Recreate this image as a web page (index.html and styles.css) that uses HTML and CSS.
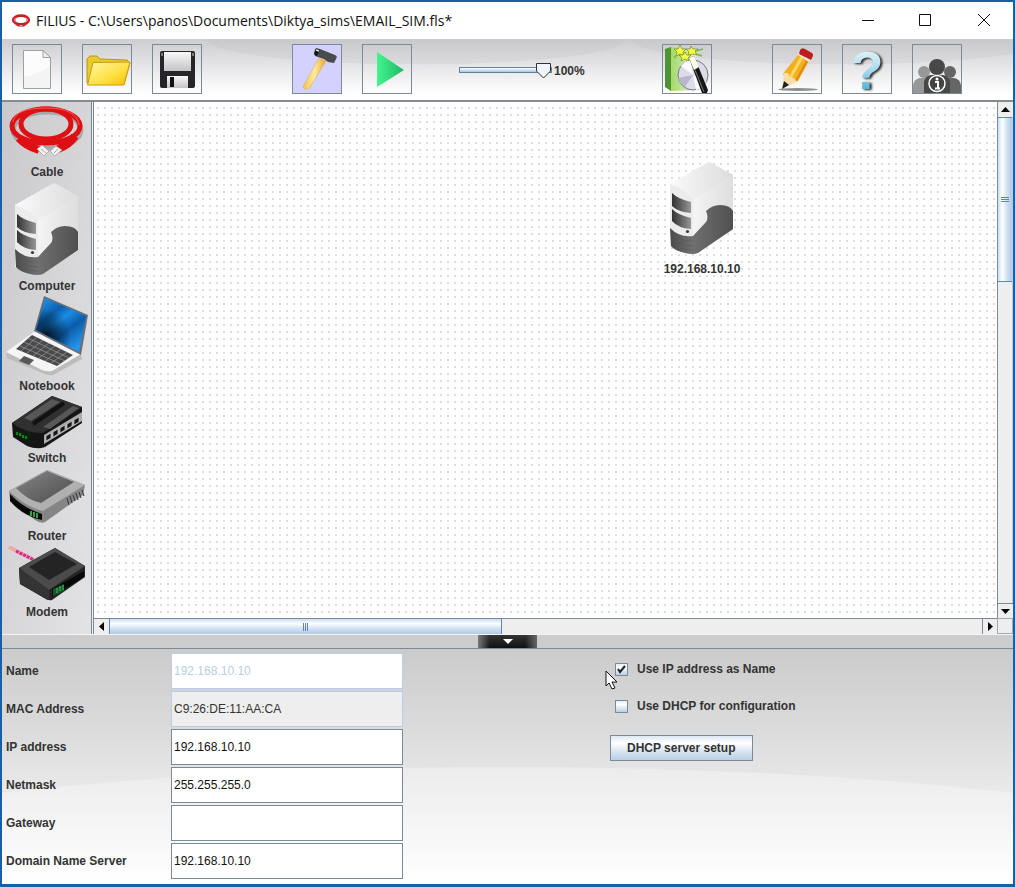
FILE: index.html
```html
<!DOCTYPE html>
<html lang="en">
<head>
	<title>FILIUS</title>
	<meta charset="utf-8">
	<meta name="viewport" content="width=device-width, initial-scale=1">
	<link rel="stylesheet" href="styles.css">
</head>
<body>

	<!-- shared gradients and the computer symbol -->
	<svg class="defs" width="0" height="0" aria-hidden="true">
		<defs>
			<linearGradient id="gTop" x1="0" y1="0" x2="1" y2="0"><stop offset="0" stop-color="#fafafa"/><stop offset="1" stop-color="#dcdcdc"/></linearGradient>
			<linearGradient id="gSide" x1="0" y1="0" x2="1" y2="0"><stop offset="0" stop-color="#f4f4f4"/><stop offset="1" stop-color="#dedede"/></linearGradient>
			<linearGradient id="gVent" x1="0" y1="0" x2="1" y2="0"><stop offset="0" stop-color="#333"/><stop offset="1" stop-color="#969696"/></linearGradient>
			<linearGradient id="gBase" x1="0" y1="0" x2="1" y2="0"><stop offset="0" stop-color="#4a4a4a"/><stop offset=".35" stop-color="#707070"/><stop offset="1" stop-color="#505050"/></linearGradient>
			<linearGradient id="gFolder" x1="0" y1="0" x2="1" y2="1"><stop offset="0" stop-color="#fff6a8"/><stop offset=".6" stop-color="#ffe040"/><stop offset="1" stop-color="#f2bd00"/></linearGradient>
			<linearGradient id="gPlate" x1="0" y1="0" x2="0" y2="1"><stop offset="0" stop-color="#f8f8f8"/><stop offset="1" stop-color="#c4c4c4"/></linearGradient>
			<linearGradient id="gPlay" x1="0" y1="0" x2="1" y2="0"><stop offset="0" stop-color="#42f58e"/><stop offset="1" stop-color="#20b865"/></linearGradient>
			<linearGradient id="gWood" x1="0" y1="0" x2="1" y2="0"><stop offset="0" stop-color="#f3c350"/><stop offset=".5" stop-color="#ffeb9c"/><stop offset="1" stop-color="#e5a62d"/></linearGradient>
			<linearGradient id="gHelp" x1="0" y1="0" x2="0" y2="1"><stop offset="0" stop-color="#fff"/><stop offset=".5" stop-color="#a8daee"/><stop offset="1" stop-color="#2f9dc4"/></linearGradient>
			<linearGradient id="gBook" x1="0" y1="0" x2="1" y2="0"><stop offset="0" stop-color="#a6d96c"/><stop offset="1" stop-color="#e0f0d6"/></linearGradient>
			<linearGradient id="gScreen" x1="0" y1="0" x2=".7" y2="1"><stop offset="0" stop-color="#2ba0f0"/><stop offset=".35" stop-color="#0b5fae"/><stop offset=".5" stop-color="#188ce6"/><stop offset=".7" stop-color="#0c5ca8"/><stop offset="1" stop-color="#2596ee"/></linearGradient>
			<radialGradient id="gGlow" cx=".2" cy=".7" r=".5"><stop offset="0" stop-color="#02101f"/><stop offset="1" stop-color="#02101f" stop-opacity="0"/></radialGradient>
			<linearGradient id="gGrey" x1="0" y1="0" x2="1" y2="1"><stop offset="0" stop-color="#858585"/><stop offset="1" stop-color="#4c4c4c"/></linearGradient>
			<symbol id="computer" viewBox="0 0 64 93">
				<path d="M0 22L39 0L63 13V68L23 92L0 84Z" fill="url(#gSide)"/>
				<path d="M0 22L39 0L63 13L23 37Q15 27 0 22Z" fill="url(#gTop)"/>
				<path d="M0 22Q15 27 23 37V78Q10 76 0 66Z" fill="#ececec"/>
				<path d="M23 37L63 13V52L23 76Z" fill="url(#gSide)"/>
				<path d="M0 66Q10 76 23 74L36 60Q39 56 36 49Q42 43 50 43Q60 43 63 49V67L28 91Q23 93 15 91Q5 89 1 84Z" fill="url(#gBase)"/>
				<path d="M1 71Q9 80 23 79M1 76Q9 84 23 84M2 81Q10 88 23 88" fill="none" stroke="#555" stroke-width=".5"/>
				<path d="M2 31Q8 37 21 40V51Q8 50 2 44ZM2 47Q8 53 21 56V67Q8 66 2 59Z" fill="url(#gVent)"/>
				<circle cx="17.500" cy="69.500" r="1.600" fill="#3a3a3a"/>
			</symbol>
		</defs>
	</svg>

	<div class="window">
		<header class="titlebar">
			<svg class="logo" viewBox="0 0 20 14" width="20" height="14"><ellipse cx="10" cy="6" rx="8" ry="4.500" fill="none" stroke="#d21f25" stroke-width="2.400"/><ellipse cx="10" cy="6" rx="6" ry="3.500" fill="none" stroke="#8d1217" stroke-width=".6"/><path d="M5 10L9 12M15 10L11 12" stroke="#d21f25" stroke-width="2.400"/><path d="M8.500 12H11.500" stroke="#aaa" stroke-width="2"/></svg>
			<h1>FILIUS - C:\Users\panos\Documents\Diktya_sims\EMAIL_SIM.fls*</h1>
			<button type="button" class="win-btn" aria-label="Minimize"><svg viewBox="0 0 14 14" width="14" height="14"><path d="M1 6.500H13"/></svg></button>
			<button type="button" class="win-btn" aria-label="Maximize"><svg viewBox="0 0 14 14" width="14" height="14"><path d="M.5 .5H11.500V11.500H.5Z"/></svg></button>
			<button type="button" class="win-btn" aria-label="Close"><svg viewBox="0 0 14 14" width="14" height="14"><path d="M1 0L13 12M13 0L1 12"/></svg></button>
		</header>

		<div class="toolbar">
			<div class="tool-group">
				<button type="button" class="tool" aria-label="New"><svg viewBox="1 1 48 48">
					<path d="M11.500 6.500H31L38.500 13.500V44.500H11.500Z" fill="#fcfcfc" stroke="#a0a0a0"/><path d="M12 32Q24 32 38 22V44H12Z" fill="#f4f4f4"/><path d="M31 6.500V13.500H38.500Z" fill="#eee" stroke="#a0a0a0"/>
				</svg></button>
				<button type="button" class="tool" aria-label="Open"><svg viewBox="1 1 48 48">
					<path d="M5 39V15L8 12H15L18 15L45 16L48 19L42 40Z" fill="#eac92a" stroke="#b8961c"/><path d="M11 18.500L48 18L42 41H5.500Z" fill="url(#gFolder)" stroke="#c79e12"/>
				</svg></button>
				<button type="button" class="tool" aria-label="Save"><svg viewBox="1 1 48 48">
					<rect x="8" y="7" width="35" height="37" rx="2" fill="#26262a"/><rect x="12" y="8" width="27" height="19" fill="url(#gPlate)"/><rect x="15" y="32" width="21" height="12" fill="url(#gPlate)"/><rect x="18" y="33" width="4" height="10" fill="#111"/><path d="M9 9H11V12H9ZM40 9H42V12H40Z" fill="#777"/>
				</svg></button>
			</div>
			<div class="tool-group modes">
				<button type="button" class="tool active" aria-label="Design mode"><svg viewBox="1 1 48 48">
					<path d="M27 14L34 17L18 43Q16 46 13 45L11 43Z" fill="url(#gWood)" stroke="#dba640" stroke-width=".5"/><path d="M24 4L28 5L43 11Q46 12 44 15L42 19L36 18L32 15L23 12Q21 8 24 4Z" fill="#4a4b4d"/><path d="M24 5L28 6L25 12L22 10Z" fill="#141414"/><path d="M24 6L27 7" stroke="#ddd" stroke-width="1.500"/>
				</svg></button>
				<button type="button" class="tool" aria-label="Run mode"><svg viewBox="1 1 48 48"><path d="M15 8L42 26L15 43Z" fill="url(#gPlay)"/></svg></button>
			</div>
			<div class="speed">
				<input type="range" id="speed" min="0" max="100" value="100" aria-label="Speed">
				<label for="speed">100%</label>
			</div>
			<div class="tool-group wizard">
				<button type="button" class="tool" aria-label="Software wizard"><svg viewBox="1 1 48 48">
					<path d="M3 5L9 3V47L3 43Z" fill="#4f9430"/><path d="M9 3L34 6V46L9 47Z" fill="url(#gBook)"/>
					<circle cx="31" cy="31" r="15" fill="#dcdce9" stroke="#77777e"/><path d="M31 31L19 22A15 15 0 0 1 29 16ZM31 31L44 38A15 15 0 0 1 34 46Z" fill="#fafaff"/><path d="M31 31L16 34A15 15 0 0 0 23 43Z" fill="#b6b6cd"/>
					<path d="M27 14L32 12L46 46L45 49H40Z" fill="#17171a"/><path d="M27 14L32 12L37 23L32 26Z" fill="#fffef0"/><path d="M33 26L42 48" stroke="#77777a"/>
					<g fill="#f2ff45" stroke="#738317" stroke-width=".7"><path d="M18 1L20 5L24 5L21 8L22 12L18 10L14 12L15 8L12 5L16 5Z"/><path d="M29 2L31 5L36 5L33 8L35 11L30 10L26 12L27 8L24 5L28 5Z"/><path d="M23 8L25 11L29 11L26 14L27 17L23 15L19 17L20 14L17 11L21 11Z"/></g>
					<path d="M33 7L41 5M34 10L40 12M12 12L14 14" stroke="#73bd32" stroke-width="1.500"/>
				</svg></button>
			</div>
			<div class="tool-group extras">
				<button type="button" class="tool" aria-label="Documentation"><svg viewBox="1 1 48 48">
					<ellipse cx="26" cy="45.500" rx="20" ry="1.500" fill="#8d8d8d"/><path d="M26 11L37 17L26 37L17 40L11 30L13 27Z" fill="#f5af22"/><path d="M30 13L18 34" stroke="#ffd960" stroke-width="3"/><path d="M35 17L24 37" stroke="#d98a14" stroke-width="2"/>
					<path d="M12 29L16 29L18 33L22 34L25 38L11 44Z" fill="#f5dfa7"/><path d="M12 37L17 41L10 45Z" fill="#222"/><path d="M25 10L28 8L39 14L37 18Z" fill="#ece8df"/><path d="M28 6Q30 3 33 5L40 9Q42 11 40 14L39 16L27 10Z" fill="#be1d1d"/>
				</svg></button>
				<button type="button" class="tool" aria-label="Help"><svg viewBox="1 1 48 48"><text class="q" x="25" y="45">?</text></svg></button>
				<button type="button" class="tool" aria-label="About"><svg viewBox="1 1 48 48">
					<g fill="#989898"><circle cx="12" cy="28" r="6"/><path d="M1 49V41Q2 35 8 34H17V49Z"/></g><g fill="#666"><circle cx="38" cy="28" r="6"/><path d="M33 34H42Q48 35 49 41V49H33Z"/></g><g fill="#484848"><circle cx="25" cy="23" r="8"/><path d="M12 49V38Q13 32 19 31H31Q37 32 38 38V49Z"/></g>
					<circle cx="25" cy="39.500" r="8" fill="#444" stroke="#fff" stroke-width="1.500"/><path d="M23 38H26V44M23 44.500H28" fill="none" stroke="#fff" stroke-width="2"/><circle cx="25" cy="35" r="1.500" fill="#fff"/>
				</svg></button>
			</div>
		</div>

		<main class="workspace">
			<ul class="palette">
				<li><span class="icon"><svg viewBox="0 0 78 56" width="78" height="56">
					<g fill="none" stroke="#8c8c8c" stroke-opacity=".6" stroke-width="5"><ellipse cx="39" cy="24" rx="34" ry="18"/></g>
					<g fill="none" stroke="#df1014" stroke-width="5"><ellipse cx="38" cy="20" rx="34" ry="17"/><ellipse cx="38" cy="18" rx="25" ry="15"/></g>
					<path d="M5 16Q7 2 38 2Q69 2 71 19" fill="none" stroke="#ff5950"/>
					<path d="M11 32Q18 40 31 44M67 30Q61 39 50 43" fill="none" stroke="#de0f13" stroke-width="8"/>
					<path d="M29 43L34 39L41 45L36 50ZM42 45L48 40L54 44L47 50Z" fill="#f4f1f1" stroke="#999" stroke-width=".7"/><path d="M33 43L38 47M46 47L50 43" stroke="#aaa"/>
				</svg></span>Cable</li>
				<li class="h98"><span class="icon"><svg width="64" height="93"><use href="#computer"/></svg></span>Computer</li>
				<li class="h84"><span class="icon"><svg viewBox="0 0 83 80" width="83" height="80">
					<path d="M0 56L29 35L75 58L76 63L47 79Q43 80 36 77L1 62Z" fill="#bcbcbc"/><path d="M0 56L29 35L75 58L46 75Q42 76 36 74Z" fill="#f5f5f5"/>
					<path d="M26 39L67 59L51 70L10 53Z" fill="#4a4a4c"/><path d="M22 42L63 62M18 46L59 65M14 50L55 68M31 41L15 55M37 44L21 57M43 47L27 60M49 50L33 62M55 53L39 65M61 56L45 67" stroke="#999" stroke-width=".7"/>
					<path d="M18 60L28 64L23 69L13 65Z" fill="#58585b"/><path d="M38 0L82 19L75 59L28 35Z" fill="#686e76"/><path d="M39 2L80 20L73 56L30 34Z" fill="url(#gScreen)"/><path d="M39 2L80 20L73 56L30 34Z" fill="url(#gGlow)"/>
				</svg></span>Notebook</li>
				<li class="h56"><span class="icon"><svg viewBox="0 0 71 53" width="71" height="53">
					<path d="M0 27L40 0L70 11V27L33 51Q25 54 15 50L1 41Z" fill="#151515"/><path d="M0 27L40 0L70 11L31 37Q13 37 0 27Z" fill="#303030"/>
					<path d="M12 22L40 3L48 6L19 25ZM31 31L61 10L67 12L38 33Z" fill="#575757"/><path d="M21 28L52 7" stroke="#111" stroke-width="4"/>
					<path d="M32 39L70 16V25L32 48Z" fill="#aaa"/><path d="M34 40L39 37V42L34 45ZM41 36L46 33V38L41 41ZM48 32L53 29V34L48 37ZM55 28L60 25V30L55 33ZM62 24L67 21V26L62 29Z" fill="#171717" stroke="#ddd" stroke-width=".6"/>
					<path d="M3 33L18 39V46L3 39Z" fill="#052508"/><path d="M5 36V39M8 37V40M11 39V42M14 40V43" stroke="#1a9c2b" stroke-width="1.500"/>
				</svg></span>Switch</li>
				<li class="h62"><span class="icon"><svg viewBox="0 0 77 56" width="77" height="56">
					<path d="M0 22L38 1L76 16L74 26L36 53Q32 55 26 51L1 31Z" fill="#858585"/><path d="M0 22L38 1L76 16L34 42Q18 39 0 22Z" fill="#b0b0b0"/><path d="M7 19L38 2L65 13L32 34Q18 31 7 19Z" fill="url(#gGrey)"/>
					<path d="M1 25Q14 39 33 45V51Q15 48 1 32Z" fill="#080808"/><path d="M22 42V47M25 43V48M28 44V49" stroke="#25a83f" stroke-width="2"/><path d="M58 29L60 36M61 27L63 34M64 26L66 32M67 24L69 31M70 23L72 29M73 21L75 27" stroke="#333"/>
				</svg></span>Router</li>
				<li class="h60"><span class="icon"><svg viewBox="0 0 78 56" width="78" height="56">
					<path d="M1 1L26 14" stroke="#efa9a4" stroke-width="4"/><path d="M8 5L26 14" stroke="#d72893" stroke-width="3" stroke-dasharray="3 1"/>
					<path d="M11 22L47 2L77 20V31L44 54Q40 55 36 52L12 38Z" fill="#252525"/><path d="M11 22L47 2L77 20L41 44Z" fill="#4b4b4b"/><path d="M21 21L47 6L69 18L41 34Z" fill="#242424"/><path d="M11 22L41 44V54L12 38Z" fill="#343434"/>
					<path d="M44 43L76 25V31L44 51Z" fill="#080808"/><path d="M45 43L56 38V45L45 50Z" fill="#17572b"/><path d="M49 42V47M52 40V45M55 39V44" stroke="#32c95c"/>
				</svg></span>Modem</li>
			</ul>

			<div class="network">
				<div class="canvas">
					<div class="device"><svg width="64" height="93"><use href="#computer"/></svg><span>192.168.10.10</span></div>
				</div>
				<div class="scroll scroll-v">
					<button type="button" class="arrow" aria-label="Scroll up"><svg viewBox="0 0 9 9" width="9" height="9"><path d="M0 7H9L4.500 2Z"/></svg></button>
					<div class="track"><div class="thumb"></div></div>
					<button type="button" class="arrow" aria-label="Scroll down"><svg viewBox="0 0 9 9" width="9" height="9"><path d="M0 2H9L4.500 7Z"/></svg></button>
				</div>
				<div class="scroll scroll-h">
					<button type="button" class="arrow" aria-label="Scroll left"><svg viewBox="0 0 9 9" width="9" height="9"><path d="M7 0V9L2 4.500Z"/></svg></button>
					<div class="track"><div class="thumb"></div></div>
					<button type="button" class="arrow" aria-label="Scroll right"><svg viewBox="0 0 9 9" width="9" height="9"><path d="M2 0V9L7 4.500Z"/></svg></button>
				</div>
				<div class="corner"></div>
			</div>
		</main>

		<div class="splitter">
			<button type="button" aria-label="Collapse settings"><svg viewBox="0 0 10 6" width="10" height="6"><path d="M0 0H10L5 5Z" fill="#fff"/></svg></button>
		</div>

		<form class="settings">
			<div class="fields">
				<div class="row"><label for="name">Name</label><input type="text" id="name" value="192.168.10.10" disabled></div>
				<div class="row"><label for="mac">MAC Address</label><input type="text" id="mac" value="C9:26:DE:11:AA:CA" readonly></div>
				<div class="row"><label for="ip">IP address</label><input type="text" id="ip" value="192.168.10.10"></div>
				<div class="row"><label for="netmask">Netmask</label><input type="text" id="netmask" value="255.255.255.0"></div>
				<div class="row"><label for="gateway">Gateway</label><input type="text" id="gateway" value=""></div>
				<div class="row"><label for="dns">Domain Name Server</label><input type="text" id="dns" value="192.168.10.10"></div>
			</div>
			<div class="options">
				<div class="check"><input type="checkbox" id="useIp" checked><label for="useIp">Use IP address as Name</label></div>
				<div class="check"><input type="checkbox" id="useDhcp"><label for="useDhcp">Use DHCP for configuration</label></div>
				<button type="button" class="dhcp-btn">DHCP server setup</button>
				<svg class="pointer" viewBox="0 0 13 20" width="13" height="20"><path d="M1 1V16L4 13L7 19L10 18L7 12H12Z" fill="#fff" stroke="#111"/></svg>
			</div>
		</form>
	</div>

</body>
</html>
```

FILE: styles.css
```css
* {
	box-sizing: border-box;
}

body {
	margin: 0;
	font-family: "Liberation Sans", Arial, sans-serif;
	font-size: 12px;
	line-height: 16px;
	color: #333;
}

button {
	padding: 0;
	font: inherit;
	color: inherit;
}

svg {
	display: block;
}

.defs {
	position: absolute;
}

.window {
	display: flex;
	flex-direction: column;
	min-height: 100vh;
	border: 2px solid #1760a8;
	border-bottom-width: 3px;
	background: #fff;
}

/* title bar */
.titlebar {
	display: flex;
	align-items: center;
	height: 37px;
	padding-left: 9px;
}

.titlebar h1 {
	flex: 1;
	margin: 0 0 0 5px;
	font: 14px/20px "Open Sans", "Noto Sans", sans-serif;
	color: #111;
	white-space: nowrap;
}

.win-btn {
	display: flex;
	align-items: center;
	justify-content: center;
	width: 58px;
	height: 36px;
	border: none;
	background: none;
}

.win-btn path {
	fill: none;
	stroke: #111;
}

/* toolbar */
.toolbar {
	display: flex;
	height: 63px;
	padding: 5px 10px;
	border-bottom: 2px solid #858b91;
	background: radial-gradient(ellipse 21% 42% at 41% 0, rgba(190, 190, 194, .25) 98%, transparent), radial-gradient(ellipse 21% 42% at 83% 0, rgba(190, 190, 194, .25) 98%, transparent), linear-gradient(#cdcdcf, #e6e6e8 45%, #fff 90%);
}

.tool-group {
	display: flex;
	gap: 20px;
}

.modes {
	margin-left: 90px;
}

.wizard {
	margin-left: 78px;
}

.extras {
	margin-left: 60px;
}

.tool {
	width: 50px;
	height: 50px;
	border: 1px solid #7a8a99;
	background: none;
}

.tool.active {
	background: #d3d1fd;
}

.tool svg {
	width: 48px;
	height: 48px;
}

.q {
	font: bold 54px "Liberation Sans", sans-serif;
	text-anchor: middle;
	fill: url(#gHelp);
	filter: drop-shadow(2px 1px 1px #222);
}

.speed {
	display: flex;
	align-items: center;
	width: 125px;
	margin-left: 47px;
	font-weight: bold;
	gap: 2px;
}

.speed label {
	padding-top: 3px;
}

.speed input {
	width: 93px;
	height: 16px;
	margin: 0;
	appearance: none;
	background: none;
}

.speed input::-webkit-slider-runnable-track {
	height: 6px;
	border: 1px solid #6382a0;
	background: linear-gradient(#fff, #a9c5e1);
}

.speed input::-webkit-slider-thumb {
	appearance: none;
	width: 15px;
	height: 16px;
	margin-top: -5px;
	background: url("data:image/svg+xml,%3Csvg xmlns='http://www.w3.org/2000/svg' viewBox='0 0 15 16'%3E%3Cpath d='M.5 .5H14.500V8L7.500 15L.5 8Z' fill='%23eff4fa' stroke='%23333'/%3E%3C/svg%3E");
}

/* palette and network area */
.workspace {
	display: flex;
	flex: 1;
	background: #eee;
}

.palette {
	width: 90px;
	margin: 0;
	padding: 2px 0 0 1px;
	list-style: none;
	border-right: 1px solid #7a8a99;
	background: linear-gradient(100deg, #c9c9cb, #d6d6d8 50%, #e3e3e5);
	font-weight: bold;
	text-align: center;
}

.icon {
	display: flex;
	align-items: center;
	justify-content: center;
	height: 60px;
}

.h98 .icon {
	height: 98px;
}

.h84 .icon {
	height: 84px;
}

.h56 .icon {
	height: 56px;
}

.h62 .icon {
	height: 62px;
}

.network {
	display: grid;
	flex: 1;
	grid-template-columns: 1fr 16px;
	grid-template-rows: 1fr 16px;
	margin-left: 1px;
	border-left: 1px solid #7a8a99;
}

.canvas {
	position: relative;
	background: #fff radial-gradient(circle at 4px 6px, #ddd 0, #ddd 1px, transparent 1px) 0 0 / 7px 7px;
}

.device {
	position: absolute;
	left: 568px;
	top: 60px;
	width: 80px;
	font-weight: bold;
	text-align: center;
}

.device svg {
	margin: 0 auto 6px;
}

.scroll {
	display: flex;
	background: #eee;
}

.scroll-v {
	flex-direction: column;
	border-left: 1px solid #7a8a99;
	border-right: 1px solid #b8cfe5;
}

.scroll-h {
	border-top: 1px solid #7a8a99;
}

.arrow {
	display: flex;
	align-items: center;
	justify-content: center;
	width: 15px;
	height: 15px;
	border: none;
	background: #eee;
}

.scroll-v .arrow:last-child {
	border-top: 1px solid #7a8a99;
}

.scroll-h .arrow:last-child {
	border-left: 1px solid #7a8a99;
}

.track {
	flex: 1;
}

.thumb {
	display: flex;
	align-items: center;
	justify-content: center;
	border: 1px solid #6382bf;
}

.scroll-v .thumb {
	height: 34%;
	border-width: 1px 0;
	background: linear-gradient(90deg, #c8dcf3, #fff 30%, #d5e4f5 60%, #b2cae5);
}

.scroll-h .thumb {
	width: 45%;
	height: 15px;
	border-width: 0 1px;
	background: linear-gradient(#c8dcf3, #fff 30%, #d5e4f5 60%, #b2cae5);
}

.thumb::after {
	content: "";
	width: 8px;
	height: 5px;
	background: repeating-linear-gradient(#6382bf 0 1px, transparent 1px 2px);
}

.scroll-h .thumb::after {
	width: 5px;
	height: 8px;
	background: repeating-linear-gradient(90deg, #6382bf 0 1px, transparent 1px 2px);
}

.corner {
	border: 1px solid #a0a9b2;
	background: #eee;
}

/* splitter */
.splitter {
	display: flex;
	justify-content: center;
	height: 15px;
	border-top: 1px solid #f5f5f5;
	border-bottom: 1px solid #7a8a99;
	background: #ccc;
}

.splitter button {
	display: flex;
	align-items: center;
	justify-content: center;
	width: 59px;
	border: none;
	background: linear-gradient(90deg, #777, transparent 20%, transparent 80%, #666), linear-gradient(#333, #111);
}

/* settings */
.settings {
	display: flex;
	padding: 4px 4px 5px;
	background: radial-gradient(ellipse 80% 50% at 50% 100%, rgba(255, 255, 255, .3) 99%, transparent), linear-gradient(#cbcbcb, #dedede 40%, #fff);
}

.fields {
	display: flex;
	flex-direction: column;
	width: 604px;
	gap: 2px;
}

.row {
	display: flex;
	align-items: center;
}

.row label {
	width: 165px;
	font-weight: bold;
}

.row input {
	width: 232px;
	height: 36px;
	padding: 1px 2px;
	border: 1px solid #7a8a99;
	background: #fff;
	font: inherit;
	color: #111;
}

.row input:disabled {
	border-color: #b8cfe5;
	color: #b8cfe5;
}

.row input:read-only:not(:disabled) {
	border-color: #b8cfe5;
	background: #eee;
	color: #333;
}

.options {
	position: relative;
	display: flex;
	flex: 1;
	flex-direction: column;
	align-items: flex-start;
	padding-top: 8px;
	font-weight: bold;
}

.check {
	display: flex;
	align-items: center;
	height: 16px;
	margin: 0 0 21px 5px;
	gap: 9px;
}

.check input {
	width: 13px;
	height: 13px;
	margin: 0;
	appearance: none;
	border: 1px solid #7a8a99;
	background: linear-gradient(#e3edf7, #fff 30%, #b8cfe5);
}

.check input:checked {
	background: url("data:image/svg+xml,%3Csvg xmlns='http://www.w3.org/2000/svg' viewBox='0 0 11 11'%3E%3Cpath d='M2 5L4 8L9 2' fill='none' stroke='%23222' stroke-width='2'/%3E%3C/svg%3E"), linear-gradient(#e3edf7, #fff 30%, #b8cfe5);
}

.dhcp-btn {
	height: 26px;
	padding: 0 16px;
	border: 1px solid #7a8a99;
	background: linear-gradient(#dde8f3, #fff 30%, #dde8f3 60%, #b8cfe5);
}

.pointer {
	position: absolute;
	left: -5px;
	top: 17px;
}
```
